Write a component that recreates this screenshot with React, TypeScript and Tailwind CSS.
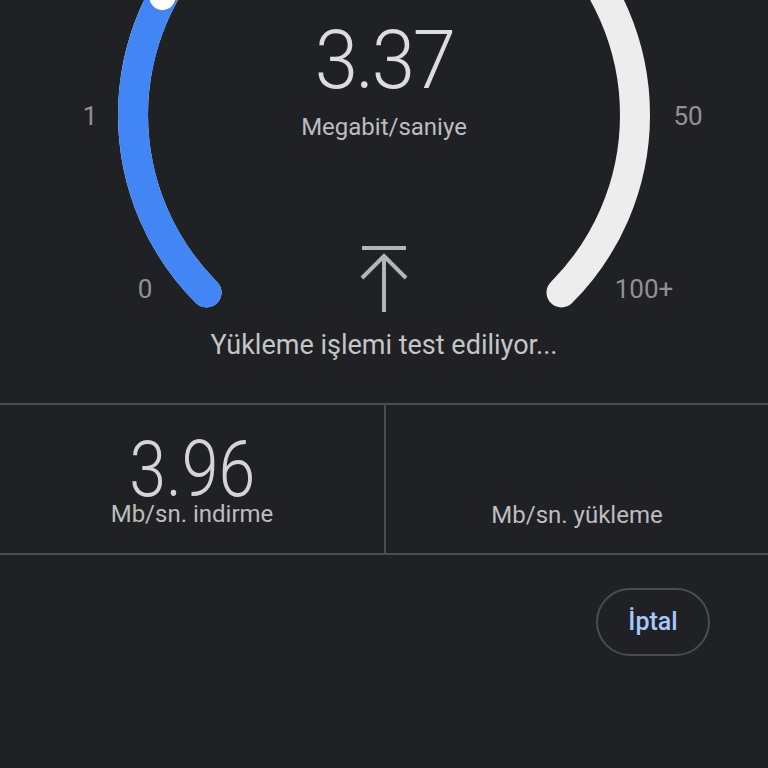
import React from "react";

const CX = 384;
const CY = 115;
const R = 251;

const pt = (deg: number) => {
  const a = (deg * Math.PI) / 180;
  return { x: CX + R * Math.cos(a), y: CY - R * Math.sin(a) };
};

const Gauge: React.FC = () => {
  const start = pt(225);
  const end = pt(315);
  const knob = pt(152);
  return (
    <svg className="absolute inset-0" width="768" height="403" viewBox="0 0 768 403">
      <path
        d={`M ${start.x} ${start.y} A ${R} ${R} 0 1 1 ${end.x} ${end.y}`}
        fill="none"
        stroke="#ededee"
        strokeWidth="30"
        strokeLinecap="round"
      />
      <path
        d={`M ${start.x} ${start.y} A ${R} ${R} 0 0 1 ${knob.x} ${knob.y}`}
        fill="none"
        stroke="#4285f4"
        strokeWidth="30"
        strokeLinecap="round"
      />
      <circle cx={knob.x} cy={knob.y} r="14" fill="#ffffff" stroke="#4285f4" strokeWidth="2" />
      <g fill="#8f9194" fontSize="26" fontFamily="Roboto, sans-serif" textAnchor="middle">
        <text x="90" y="125">1</text>
        <text x="688" y="125">50</text>
        <text x="145" y="298">0</text>
        <text x="644" y="298">100+</text>
      </g>
    </svg>
  );
};

const UploadIcon: React.FC = () => (
  <svg width="48" height="66" viewBox="0 0 48 66" fill="none" stroke="#b4b5b7" strokeWidth="4">
    <line x1="2" y1="2" x2="46" y2="2" />
    <line x1="24" y1="10" x2="24" y2="66" />
    <polyline points="2,32 24,10 46,32" />
  </svg>
);

export default function App() {
  return (
    <div
      className="w-full h-[768px] bg-[#202124] overflow-hidden"
      style={{ fontFamily: "Roboto, 'Noto Sans', sans-serif" }}
    >
      <div className="relative h-[403px] flex flex-col items-center">
        <Gauge />
        <div className="relative mt-[19px] text-[82px] font-light leading-none text-[#dcdcdc] tracking-[-0.03em] scale-x-[0.95]">
          3.37
        </div>
        <div className="relative mt-[14px] text-[24px] text-[#bdbdbd] leading-none">Megabit/saniye</div>
        <div className="relative mt-[107px]">
          <UploadIcon />
        </div>
        <div className="relative mt-[20px] text-[27px] text-[#c4c5c7] leading-none">
          Yükleme işlemi test ediliyor...
        </div>
      </div>

      <div className="grid grid-cols-2 h-[152px] border-y-2 border-[#4a4c50]">
        <div className="flex flex-col items-center pt-[37px]">
          <div className="text-[77px] font-light leading-[56px] text-[#d4d4d4] scale-x-[0.86]">3.96</div>
          <div className="mt-[3px] text-[24px] leading-[26px] text-[#bdbdbd]">Mb/sn. indirme</div>
        </div>
        <div className="flex flex-col items-center justify-end pb-[26px] border-l-2 border-[#4a4c50]">
          <div className="text-[24px] leading-none text-[#bdbdbd]">Mb/sn. yükleme</div>
        </div>
      </div>

      <div className="flex justify-end pr-[58px] pt-[33px]">
        <button className="w-[114px] h-[68px] rounded-full border-2 border-[#4a4c50] text-[#a8c7fa] text-[25px] font-medium">
          İptal
        </button>
      </div>
    </div>
  );
}
